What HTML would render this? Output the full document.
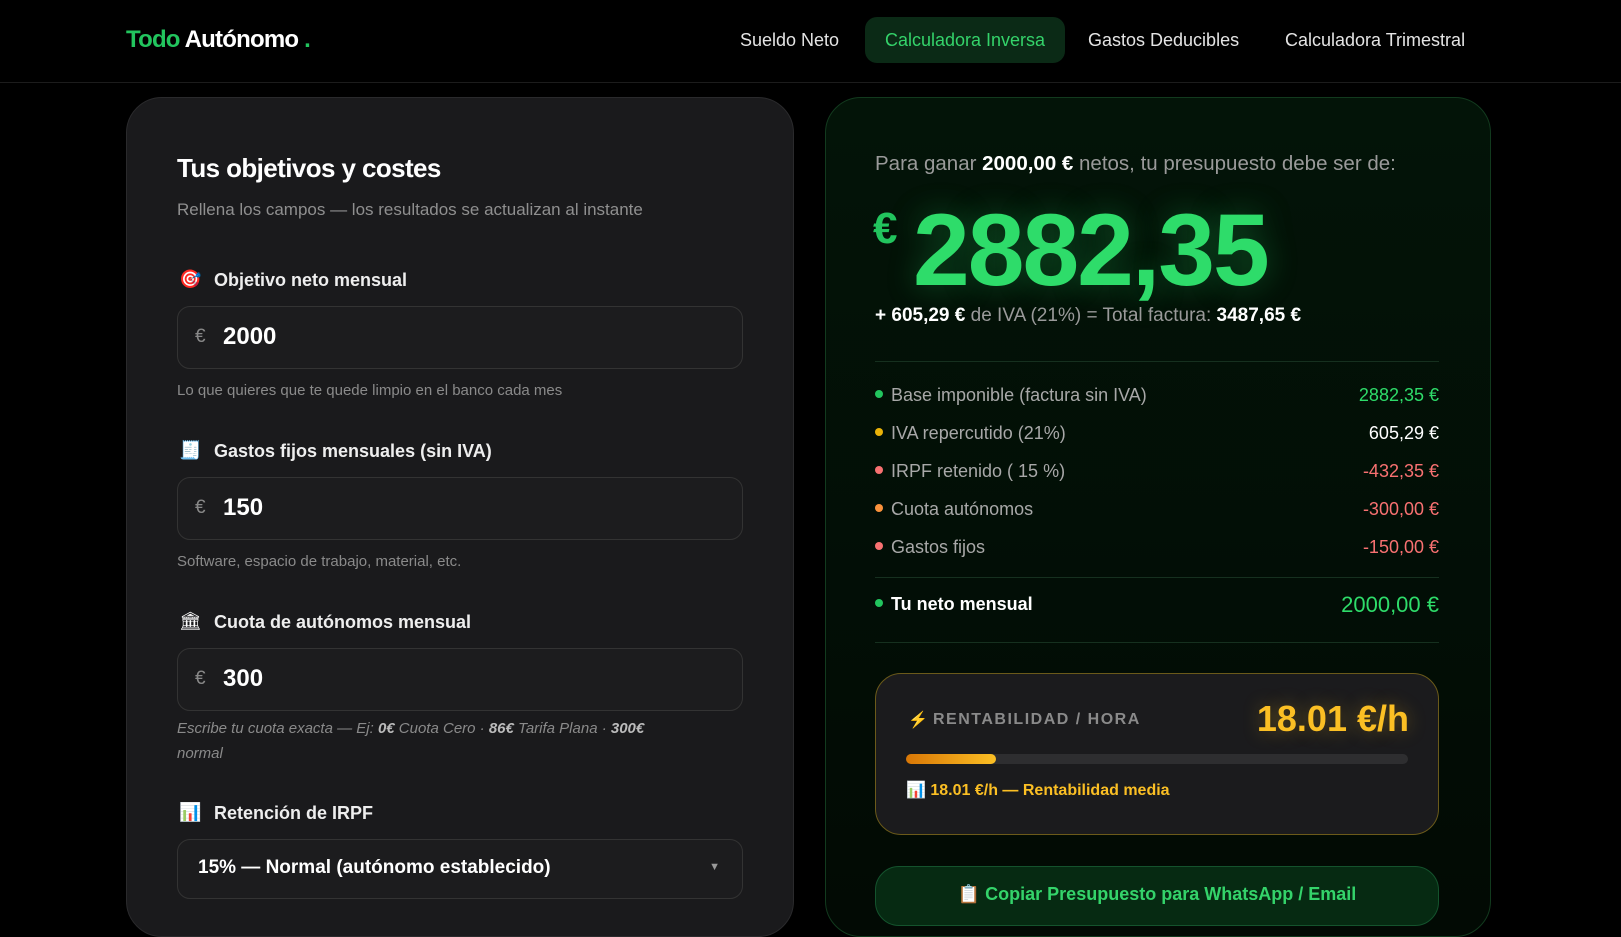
<!DOCTYPE html>
<html><head><meta charset="utf-8"><style>
*{box-sizing:border-box;margin:0;padding:0}
body{width:1621px;height:905px;overflow:hidden;background:#000;font-family:"Liberation Sans",sans-serif;color:#fff;position:relative}
.abs{position:absolute}
.hdr{position:absolute;left:0;top:0;width:1621px;height:83px;border-bottom:1px solid #1c1c1c}
.logo{left:126px;top:26px;font-size:24px;font-weight:700;letter-spacing:-0.8px}
.nav{top:17px;height:46px;line-height:46px;font-size:18px;color:#e4e4e4}
.card{position:absolute;top:97px;border-radius:36px}
.left{left:126px;width:668px;height:840px;background:#1a1a1c;border:1px solid #2a2a2c}
.right{left:825px;width:666px;height:840px;background:linear-gradient(180deg,#031408,#020a04);border:1px solid #123a1e}
.lbl{left:214px;font-size:18px;font-weight:700;color:#eee}
.ico{left:179px;font-size:18px}
.inp{left:177px;width:566px;height:63px;border:1px solid #333;border-radius:13px;background:#1c1c1e}
.inp .e{position:absolute;left:17px;top:19px;font-size:19px;color:#888}
.inp .v{position:absolute;left:45px;top:16px;font-size:24px;font-weight:700}
.hint{left:177px;font-size:15px;color:#8a8a8a}
.row{left:875px;width:564px;font-size:18px;color:#a8a8a8}
.row .d{display:inline-block;width:8px;height:8px;border-radius:50%;margin-right:8px;vertical-align:middle;position:relative;top:-2px}
.row .r{position:absolute;right:0;top:0}
.hr{left:875px;width:564px;height:1px;background:#16301f}
</style></head><body>
<div class="hdr"></div>
<div class="abs logo"><span style="color:#22c55e">Todo</span> Autónomo <span style="color:#22c55e">.</span></div>
<div class="abs nav" style="left:740px">Sueldo Neto</div>
<div class="abs nav" style="left:865px;width:200px;text-align:center;background:#0b2a16;border-radius:12px;color:#34d36a">Calculadora Inversa</div>
<div class="abs nav" style="left:1088px">Gastos Deducibles</div>
<div class="abs nav" style="left:1285px">Calculadora Trimestral</div>

<div class="card left"></div>
<div class="abs" style="left:177px;top:153px;font-size:26px;font-weight:700;letter-spacing:-0.6px">Tus objetivos y costes</div>
<div class="abs" style="left:177px;top:200px;font-size:17px;color:#8f8f8f">Rellena los campos — los resultados se actualizan al instante</div>

<div class="abs ico" style="top:269px">🎯</div><div class="abs lbl" style="top:270px">Objetivo neto mensual</div>
<div class="abs inp" style="top:306px"><span class="e">€</span><span class="v">2000</span></div>
<div class="abs hint" style="top:382px">Lo que quieres que te quede limpio en el banco cada mes</div>

<div class="abs ico" style="top:440px">🧾</div><div class="abs lbl" style="top:441px">Gastos fijos mensuales (sin IVA)</div>
<div class="abs inp" style="top:477px"><span class="e">€</span><span class="v">150</span></div>
<div class="abs hint" style="top:553px">Software, espacio de trabajo, material, etc.</div>

<div class="abs ico" style="top:611px">🏛</div><div class="abs lbl" style="top:612px">Cuota de autónomos mensual</div>
<div class="abs inp" style="top:648px"><span class="e">€</span><span class="v">300</span></div>
<div class="abs hint" style="top:716px;font-style:italic;line-height:25px;width:500px">Escribe tu cuota exacta — Ej: <b style="color:#bbb">0€</b> Cuota Cero · <b style="color:#bbb">86€</b> Tarifa Plana · <b style="color:#bbb">300€</b> normal</div>

<div class="abs ico" style="top:802px">📊</div><div class="abs lbl" style="top:803px">Retención de IRPF</div>
<div class="abs inp" style="top:839px;height:60px"><span style="position:absolute;left:20px;top:17px;font-size:19px;font-weight:700">15% — Normal (autónomo establecido)</span><span style="position:absolute;right:22px;top:21px;font-size:11px;color:#999">▼</span></div>

<div class="card right"></div>
<div class="abs" style="left:875px;top:152px;font-size:20.5px;color:#9a9a9a">Para ganar <b style="color:#fff">2000,00 €</b> netos, tu presupuesto debe ser de:</div>
<div class="abs" style="left:873px;top:204px;font-size:44px;font-weight:700;color:#22c55e">€</div>
<div class="abs" style="left:913px;top:194px;font-size:102px;font-weight:700;color:#2edc6a;letter-spacing:-2px;line-height:112px;text-shadow:0 0 30px rgba(34,197,94,.35)">2882,35</div>
<div class="abs" style="left:875px;top:305px;font-size:19px;color:#9a9a9a"><b style="color:#fff">+ 605,29 €</b> de IVA (21%) = Total factura: <b style="color:#fff">3487,65 €</b></div>
<div class="abs hr" style="top:361px"></div>
<div class="abs row" style="top:385px"><span class="d" style="background:#22c55e"></span>Base imponible (factura sin IVA)<span class="r" style="color:#2edc6a">2882,35 €</span></div>
<div class="abs row" style="top:423px"><span class="d" style="background:#eab308"></span>IVA repercutido (21%)<span class="r" style="color:#fff">605,29 €</span></div>
<div class="abs row" style="top:461px"><span class="d" style="background:#f87171"></span>IRPF retenido ( 15 %)<span class="r" style="color:#f87171">-432,35 €</span></div>
<div class="abs row" style="top:499px"><span class="d" style="background:#fb923c"></span>Cuota autónomos<span class="r" style="color:#f87171">-300,00 €</span></div>
<div class="abs row" style="top:537px"><span class="d" style="background:#f87171"></span>Gastos fijos<span class="r" style="color:#f87171">-150,00 €</span></div>
<div class="abs hr" style="top:577px"></div>
<div class="abs row" style="top:594px;color:#fff;font-weight:700"><span class="d" style="background:#22c55e"></span>Tu neto mensual<span class="r" style="color:#2edc6a;font-weight:400;font-size:22px;top:-2px">2000,00 €</span></div>
<div class="abs hr" style="top:642px"></div>

<div class="abs" style="left:875px;top:673px;width:564px;height:162px;border:1px solid #6b5a1a;border-radius:26px;background:#1b1b1d"></div>
<div class="abs" style="left:908px;top:710px;font-size:16px;color:#f97316">⚡</div>
<div class="abs" style="left:933px;top:711px;font-size:16px;font-weight:700;color:#8a8a8a;letter-spacing:1.5px">RENTABILIDAD / HORA</div>
<div class="abs" style="right:212px;top:698px;font-size:36px;font-weight:700;color:#fbbf24;text-shadow:0 0 18px rgba(251,191,36,.35)">18.01 €/h</div>
<div class="abs" style="left:906px;top:754px;width:502px;height:10px;border-radius:5px;background:#2e2e30"></div>
<div class="abs" style="left:906px;top:754px;width:90px;height:10px;border-radius:5px;background:linear-gradient(90deg,#d97706,#fbbf24)"></div>
<div class="abs" style="left:906px;top:780px;font-size:16px;font-weight:700;color:#fbbf24">📊 18.01 €/h — Rentabilidad media</div>

<div class="abs" style="left:875px;top:866px;width:564px;height:60px;border:1px solid #14532d;border-radius:24px;background:#062a12"></div>
<div class="abs" style="left:875px;top:884px;width:564px;text-align:center;font-size:18px;font-weight:700;color:#34d36a">📋 Copiar Presupuesto para WhatsApp / Email</div>
</body></html>
